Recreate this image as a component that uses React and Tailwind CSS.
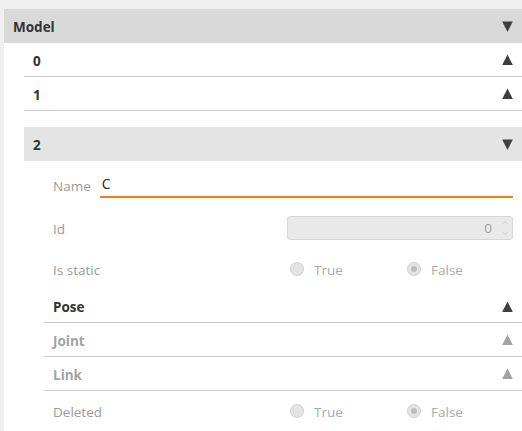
import { ChevronUp, ChevronDown } from 'lucide-react'

function Tri({ dir = 'up', muted = false }) {
  const fill = muted ? '#a3a3a3' : '#3f3f3f'
  return (
    <svg width="11" height="12" viewBox="0 0 11 12" className="mt-[1px] shrink-0">
      {dir === 'up' ? (
        <polygon points="5.5,0.5 10.8,11 0.2,11" fill={fill} />
      ) : (
        <polygon points="0.2,0.5 10.8,0.5 5.5,11" fill={fill} />
      )}
    </svg>
  )
}

function Radio({ checked, label }) {
  return (
    <label className="flex w-[117px] shrink-0 items-center gap-[10px]">
      <span className="flex h-[14px] w-[14px] items-center justify-center rounded-full border border-[#d2d2d2] bg-[#e4e4e4]">
        {checked && <span className="h-[6px] w-[6px] rounded-full bg-[#bdbdbd]" />}
      </span>
      <span className="pt-[4px] text-[#aaaaaa]">{label}</span>
    </label>
  )
}

function BoolField({ label, value }) {
  return (
    <div className="flex items-center justify-between">
      <span className="pt-[4px] text-[#9a9a9a]">{label}</span>
      <div className="flex w-[226px] pl-[3px]">
        <Radio label="True" checked={value === true} />
        <Radio label="False" checked={value === false} />
      </div>
    </div>
  )
}

function SubSection({ title, muted }) {
  return (
    <div className="flex h-[34px] items-center justify-between border-b border-[#cccccc] px-[9px]">
      <span className={muted ? 'pt-[4px] font-bold text-[#a3a3a3]' : 'pt-[4px] font-bold text-[#333333]'}>
        {title}
      </span>
      <Tri dir="up" muted={muted} />
    </div>
  )
}

export default function App() {
  return (
    <div
      className="h-[431px] w-[522px] overflow-hidden bg-[#f0f0f0] pl-[4px] pt-[9px] text-[13.5px] leading-none"
      style={{ fontFamily: '"Open Sans", "Noto Sans", sans-serif' }}
    >
      <div className="h-full bg-white">
        <div className="flex h-[34px] items-center justify-between bg-[#d9d9d9] pl-[9px] pr-[9px]">
          <span className="pt-[4px] font-bold text-[#333333]">Model</span>
          <Tri dir="down" />
        </div>

        <div className="pl-[20px]">
          <div className="flex h-[34px] items-center justify-between border-b border-[#cccccc] px-[9px]">
            <span className="pt-[4px] font-bold text-[#333333]">0</span>
            <Tri dir="up" />
          </div>
          <div className="flex h-[34px] items-center justify-between border-b border-[#cccccc] px-[9px]">
            <span className="pt-[4px] font-bold text-[#333333]">1</span>
            <Tri dir="up" />
          </div>

          <div className="mt-[16px] flex h-[34px] items-center justify-between bg-[#e4e4e4] px-[9px]">
            <span className="pt-[4px] font-bold text-[#333333]">2</span>
            <Tri dir="down" />
          </div>

          <div className="pl-[20px]">
            <div className="flex h-[47px] items-center px-[9px]">
              <span className="pt-[4px] text-[#9a9a9a]">Name</span>
              <div className="ml-[9px] flex h-[26px] flex-1 items-center border-b-2 border-[#ef7d0d] pl-[2px] pt-[1px] text-[14px] text-[#222222]">
                C
              </div>
            </div>

            <div className="flex h-[40px] items-center justify-between px-[9px]">
              <span className="pt-[4px] text-[#9a9a9a]">Id</span>
              <div className="flex h-[24px] w-[226px] items-stretch rounded-[3px] border border-[#d6d6d6] bg-[#e9e9e9]">
                <span className="flex flex-1 items-center justify-end pr-[6px] pt-[2px] text-[#a0a0a0]">0</span>
                <span className="flex w-[14px] flex-col items-center justify-between py-[2px] text-[#b0b0b0]">
                  <ChevronUp size={7} strokeWidth={2} />
                  <ChevronDown size={7} strokeWidth={2} />
                </span>
              </div>
            </div>

            <div className="flex h-[42px] items-center px-[9px]">
              <div className="flex-1">
                <BoolField label="Is static" value={false} />
              </div>
            </div>

            <div className="flex h-[33px] items-center justify-between border-b border-[#cccccc] px-[9px]">
              <span className="pt-[4px] font-bold text-[#333333]">Pose</span>
              <Tri dir="up" />
            </div>
            <SubSection title="Joint" muted />
            <SubSection title="Link" muted />

            <div className="flex h-[40px] items-center px-[9px]">
              <div className="flex-1">
                <BoolField label="Deleted" value={false} />
              </div>
            </div>
          </div>
        </div>
      </div>
    </div>
  )
}
